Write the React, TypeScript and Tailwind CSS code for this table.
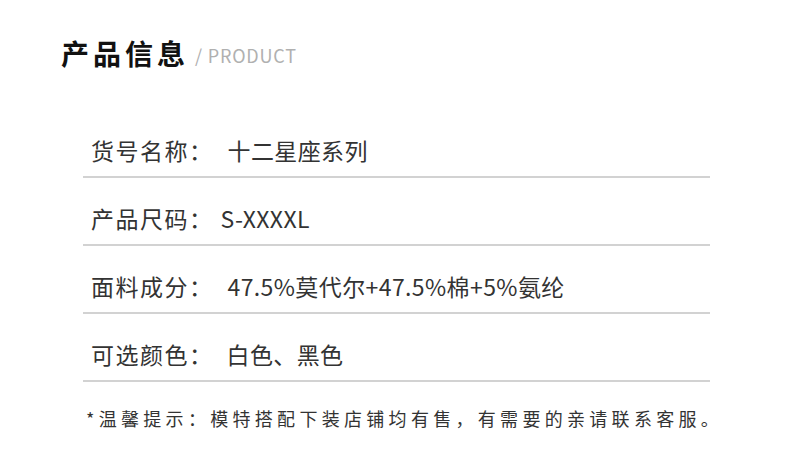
import React from "react";

const cjk = { fontFamily: '"Noto Sans CJK SC", "Noto Sans", sans-serif' };

const rows: { label: string; value: string; gap: string }[] = [
  { label: "货号名称：", value: "十二星座系列", gap: "ml-[14px]" },
  { label: "产品尺码：", value: "S-XXXXL", gap: "ml-[7px]" },
  { label: "面料成分：", value: "47.5%莫代尔+47.5%棉+5%氨纶", gap: "ml-[14px]" },
  { label: "可选颜色：", value: "白色、黑色", gap: "ml-[13px]" },
];

export default function App() {
  return (
    <div className="w-[790px] h-[473px] bg-white overflow-hidden" style={cjk}>
      <div className="h-[110px] pl-[61px] pt-[34px] flex items-start">
        <div className="flex items-center">
          <span className="text-[28px] leading-[34px] font-semibold text-[#111] tracking-[4px]">产品信息</span>
          <span className="ml-[6px] text-[18px] leading-[34px] text-[#b0b0b0] tracking-[0.8px] pt-[4px]">/ PRODUCT</span>
        </div>
      </div>
      <div className="ml-[83px] w-[627px]">
        {rows.map((r) => (
          <div key={r.label} className="h-[68px] border-b-2 border-[#d2d2d2] flex items-end pb-[14px] pl-[8px]">
            <span className="text-[23px] leading-[24px] text-[#333] tracking-[1.5px]">{r.label}</span>
            <span className={`${r.gap} text-[23px] leading-[24px] text-[#333] tracking-[0.4px]`}>{r.value}</span>
          </div>
        ))}
      </div>
      <div className="ml-[86px] mt-[26px] text-[18px] leading-[20px] text-[#333] tracking-[4.3px] whitespace-nowrap">
        *温馨提示：模特搭配下装店铺均有售，有需要的亲请联系客服。
      </div>
    </div>
  );
}
